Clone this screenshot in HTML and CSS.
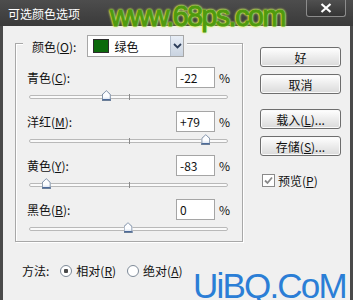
FILE: index.html
```html
<!DOCTYPE html>
<html lang="zh-CN">
<head>
<meta charset="UTF-8">
<title>可选颜色选项</title>
<link rel="stylesheet" href="styles.css">
</head>
<body>

<div class="dialog">
  <!-- Title bar -->
  <div class="titlebar">
    <span class="title">可选颜色选项</span>
    <span class="close">
      <svg width="12" height="10" viewBox="0 0 12 10"><path d="M1.5 1 L10.5 9 M10.5 1 L1.5 9" stroke="#fff" stroke-width="2.2"/></svg>
    </span>
  </div>

  <div class="body">
    <div class="main">
      <!-- Colour group -->
      <div class="group">
        <div class="group-head">
          <span class="label">颜色(<u>O</u>):</span>
          <div class="select">
            <span class="swatch"></span>
            <span class="select-text">绿色</span>
            <span class="arrow">
              <svg width="9" height="6" viewBox="0 0 9 6"><path d="M1 1 L4.5 4.5 L8 1" fill="none" stroke="#2d3e5a" stroke-width="1.8"/></svg>
            </span>
          </div>
        </div>

        <div class="row">
          <span class="label">青色(<u>C</u>):</span>
          <span class="value">-22</span>
          <span class="pct">%</span>
        </div>
        <div class="slider"><span class="thumb" style="left: 39%"></span></div>

        <div class="row">
          <span class="label">洋红(<u>M</u>):</span>
          <span class="value">+79</span>
          <span class="pct">%</span>
        </div>
        <div class="slider"><span class="thumb" style="left: 89.5%"></span></div>

        <div class="row">
          <span class="label">黄色(<u>Y</u>):</span>
          <span class="value">-83</span>
          <span class="pct">%</span>
        </div>
        <div class="slider"><span class="thumb" style="left: 8.5%"></span></div>

        <div class="row">
          <span class="label">黑色(<u>B</u>):</span>
          <span class="value">0</span>
          <span class="pct">%</span>
        </div>
        <div class="slider"><span class="thumb" style="left: 50%"></span></div>
      </div>

      <!-- Method -->
      <div class="method">
        <span>方法:</span>
        <span class="radio checked"></span><span>相对(<u>R</u>)</span>
        <span class="radio"></span><span>绝对(<u>A</u>)</span>
      </div>
    </div>

    <!-- Buttons -->
    <div class="side">
      <button class="btn">好</button>
      <button class="btn">取消</button>
      <button class="btn btn-gap">载入(<u>L</u>)...</button>
      <button class="btn">存储(<u>S</u>)...</button>
      <div class="check-row">
        <span class="checkbox">
          <svg width="11" height="11" viewBox="0 0 11 11"><path d="M2 5.5 L4.5 8 L9 2.5" fill="none" stroke="#8a8a8a" stroke-width="1.8"/></svg>
        </span>
        <span>预览(<u>P</u>)</span>
      </div>
    </div>
  </div>

  <!-- watermarks lying over the dialog -->
  <div class="mark-top">www.68ps.com</div>
  <div class="mark-bottom">UiBQ.CoM</div>
</div>

</body>
</html>
```

FILE: styles.css
```css
/* Selective colour dialog */
body {
margin: 0;
font-family: "Noto Sans CJK SC", "Liberation Sans", sans-serif;
font-size: 12px;
color: #111;
background: #f0f0f0;
}

.dialog {
position: relative;
width: 353px;
height: 300px;
overflow: hidden;
}

.titlebar {
height: 26px;
display: flex;
align-items: center;
padding-left: 8px;
background: linear-gradient(#4d4d4d, #3a3a3a);
color: #fff;
font-size: 12px;
}

.close {
margin-left: auto;
margin-right: 7px;
align-self: flex-start;
width: 40px;
height: 17px;
display: flex;
align-items: center;
justify-content: center;
box-sizing: border-box;
border: 1px solid #8c8c8c;
border-top: none;
border-radius: 0 0 3px 3px;
background: linear-gradient(#505050, #353535);
}

.body {
display: flex;
height: 274px;
box-sizing: border-box;
border-left: 3px solid #4a4a4a;
border-right: 3px solid #4a4a4a;
background: #f0f0f0;
}

.main {
padding: 17px 0 0 12px;
}

/* Group box */
.group {
width: 228px;
box-sizing: border-box;
border: 1px solid #a8a8a8;
box-shadow: inset 1px 1px #fff, 1px 1px #fff;
padding: 0 13px 10px 11px;
}

.group-head {
display: flex;
align-items: center;
width: fit-content;
margin: -9px 0 0 -4px;
padding: 0 3px 0 9px;
background: #f0f0f0;
}

.group-head .label {
margin-right: 11px;
}

.select {
width: 97px;
height: 22px;
box-sizing: border-box;
display: flex;
align-items: center;
border: 1px solid #a7a7a7;
background: #fff;
}

.swatch {
width: 16px;
height: 14px;
margin: 0 5px 0 5px;
background: #0b6a0b;
border: 1px solid #2c2c2c;
box-sizing: border-box;
}

.select-text {
flex: 1;
}

.arrow {
width: 12px;
height: 20px;
display: flex;
align-items: center;
justify-content: center;
background: linear-gradient(#e8eef6, #c9d3e0);
border-left: 1px solid #b5bfcc;
}

/* Slider rows */
.row {
display: flex;
align-items: center;
height: 21px;
margin-top: 10px;
}

.row + .slider + .row {
margin-top: 12px;
}

.row .label {
flex: 1;
}

.value {
width: 39px;
height: 21px;
box-sizing: border-box;
padding: 1px 3px;
border: 1px solid #a5a5a5;
background: #fff;
line-height: 17px;
}

.pct {
width: 10px;
margin-left: 4px;
}

.slider {
position: relative;
height: 4px;
width: 199px;
margin: 7px 0 0 2px;
box-sizing: border-box;
border: 1px solid #b9b9b9;
border-radius: 2px;
background: #fafafa;
}

.slider::after {
content: "";
position: absolute;
left: 50%;
top: -2px;
width: 1px;
height: 6px;
background: #8a8a8a;
}

.thumb {
position: absolute;
top: -6px;
width: 9px;
height: 11px;
margin-left: -5px;
z-index: 1;
background: linear-gradient(#fcfdff 60%, #c7d4e6);
clip-path: polygon(50% 0, 100% 38%, 100% 100%, 0 100%, 0 38%);
box-shadow: inset 0 -2px #4c6a9a;
}

.thumb::before {
content: "";
position: absolute;
inset: 0;
background: #6c7f98;
clip-path: polygon(50% 0, 100% 38%, 100% 100%, 0 100%, 0 38%, 1px 40%, 1px calc(100% - 1px), calc(100% - 1px) calc(100% - 1px), calc(100% - 1px) 40%, 50% 1px, 1px 40%, 0 38%);
}

/* Method row */
.method {
display: flex;
align-items: center;
margin-top: 20px;
padding-left: 7px;
}

.radio {
width: 12px;
height: 12px;
box-sizing: border-box;
margin: 0 4px 0 11px;
border: 1px solid #7e8a98;
border-radius: 50%;
background: #fff;
}

.radio.checked {
background: radial-gradient(circle, #4a4a4a 0 2px, #fff 2.5px);
}

/* Side buttons */
.side {
display: flex;
flex-direction: column;
padding: 21px 0 0 17px;
}

.btn {
width: 81px;
height: 20px;
padding: 0;
margin-bottom: 7px;
font-family: inherit;
font-size: 12px;
color: #111;
border: 1px solid #6e6e6e;
border-radius: 3px;
background: linear-gradient(#ffffff, #ececec 50%, #dadada);
box-shadow: inset 0 0 0 1px #fafafa;
}

.btn-gap {
margin-top: 8px;
}

.check-row {
display: flex;
align-items: center;
margin: 9px 0 0 2px;
}

.checkbox {
width: 13px;
height: 13px;
box-sizing: border-box;
margin-right: 3px;
display: flex;
align-items: center;
justify-content: center;
border: 1px solid #8a8a8a;
background: #fff;
}

/* Watermarks */
.mark-top {
position: absolute;
left: 110px;
top: 1px;
font-family: "Liberation Sans", sans-serif;
font-size: 29px;
line-height: 30px;
letter-spacing: -1.7px;
color: #4f9a0e;
-webkit-text-stroke: 1px #4f9a0e;
text-shadow: 0 0 2px #e8ff7a, 0 0 2px #e8ff7a, 0 0 3px #d6f060, 0 0 3px #d6f060;
}

.mark-bottom {
position: absolute;
left: 193px;
top: 265px;
font-family: "Liberation Sans", sans-serif;
font-size: 35px;
line-height: 42px;
letter-spacing: -1.8px;
color: #2b7ed6;
}
```
